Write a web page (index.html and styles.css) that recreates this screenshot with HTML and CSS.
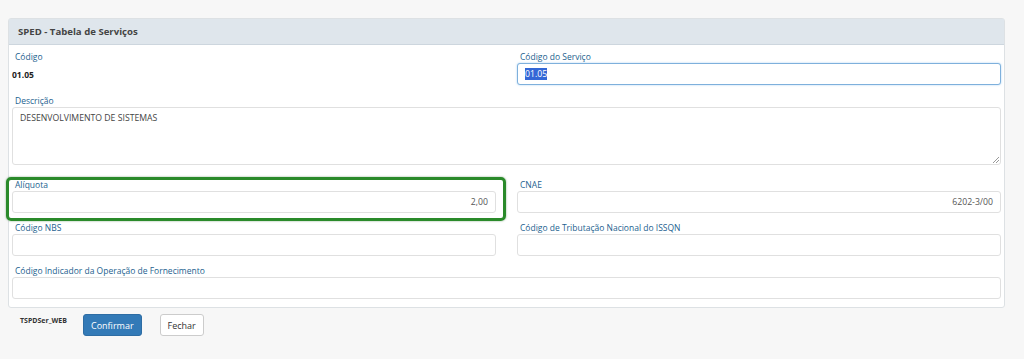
FILE: index.html
```html
<!DOCTYPE html>
<html lang="pt-BR">
<head>
    <meta charset="UTF-8">
    <title>SPED - Tabela de Serviços</title>
    <link rel="stylesheet" href="styles.css">
</head>
<body>
    <div class="panel">
        <div class="panel-heading">SPED - Tabela de Serviços</div>
        <div class="panel-body">
            <div class="row">
                <div class="field">
                    <label>Código</label>
                    <div class="static-value">01.05</div>
                </div>
                <div class="field">
                    <label>Código do Serviço</label>
                    <div class="input focused"><span class="selected">01.05</span></div>
                </div>
            </div>
            <div class="field full desc">
                <label>Descrição</label>
                <div class="input textarea">DESENVOLVIMENTO DE SISTEMAS<span class="grip"></span></div>
            </div>
            <div class="row">
                <div class="field highlighted">
                    <label>Alíquota</label>
                    <div class="input right">2,00</div>
                    <div class="highlight-box"></div>
                </div>
                <div class="field">
                    <label>CNAE</label>
                    <div class="input right">6202-3/00</div>
                </div>
            </div>
            <div class="row">
                <div class="field">
                    <label>Código NBS</label>
                    <div class="input"></div>
                </div>
                <div class="field">
                    <label>Código de Tributação Nacional do ISSQN</label>
                    <div class="input"></div>
                </div>
            </div>
            <div class="field full last">
                <label>Código Indicador da Operação de Fornecimento</label>
                <div class="input"></div>
            </div>
        </div>
    </div>
    <div class="footer">
        <span class="form-name">TSPDSer_WEB</span>
        <button class="btn btn-primary">Confirmar</button>
        <button class="btn btn-default">Fechar</button>
    </div>
</body>
</html>
```

FILE: styles.css
```css
body {
    margin: 0;
    padding: 18px 19px 0 8px;
    background: #f7f7f7;
    font-family: 'Open Sans', 'Noto Sans', sans-serif;
    font-size: 9px;
    color: #333;
}
.panel {
    background: #fff;
    border: 1px solid #dde1e4;
    border-radius: 3px;
}
.panel-heading {
    height: 25px;
    line-height: 25px;
    padding-left: 9px;
    background: #dfe6ec;
    border-bottom: 1px solid #cdd6de;
    font-size: 9.6px;
    font-weight: bold;
    color: #444;
}
.panel-body {
    padding: 5px 3px 8px 3px;
}
.row {
    display: grid;
    grid-template-columns: 484px 484px;
    column-gap: 21px;
}
.field {
    position: relative;
    margin-bottom: 8px;
}
.field.desc {
    margin-top: 1px;
}
.field.last {
    margin-bottom: 0;
}
label {
    display: block;
    height: 13px;
    line-height: 13px;
    padding-left: 3px;
    color: #245f8f;
    font-size: 8.5px;
}
.static-value {
    height: 22px;
    line-height: 24px;
    font-weight: bold;
    font-size: 8.5px;
    color: #222;
}
.input {
    box-sizing: border-box;
    height: 22px;
    line-height: 20px;
    padding: 0 7px;
    border: 1px solid #e0e0e0;
    border-radius: 3px;
    background: #fff;
    font-size: 8.7px;
    color: #555;
}
.input.right {
    text-align: right;
}
.input.focused {
    border-color: #7eb0dc;
    box-shadow: 0 0 2px rgba(102, 175, 233, 0.6);
}
.selected {
    background: #3367d6;
    color: #fff;
}
.input.textarea {
    position: relative;
    height: 58px;
    line-height: 20px;
    margin-bottom: 13px;
    color: #444;
}
.grip {
    position: absolute;
    right: 1px;
    bottom: 1px;
    width: 6px;
    height: 6px;
    background: linear-gradient(135deg, transparent 45%, #999 45%, #999 55%, transparent 55%, transparent 70%, #999 70%, #999 80%, transparent 80%);
}
.highlight-box {
    position: absolute;
    left: -6px;
    top: -1px;
    right: -10px;
    bottom: -8px;
    border: 3px solid #2a8a2a;
    border-radius: 5px;
    box-shadow: 0 0 2px rgba(0, 80, 0, 0.5);
    pointer-events: none;
}
.footer {
    display: flex;
    align-items: flex-start;
    padding: 6px 0 0 12px;
}
.form-name {
    font-size: 7px;
    font-weight: bold;
    color: #333;
    margin-top: 2px;
    width: 63px;
}
.btn {
    height: 22px;
    padding: 0 7px;
    border-radius: 3px;
    font-family: inherit;
    font-size: 9px;
    cursor: pointer;
}
.btn-primary {
    background: #337ab7;
    border: 1px solid #2e6da4;
    color: #fff;
    margin-right: 18px;
}
.btn-default {
    background: #fff;
    border: 1px solid #ccc;
    color: #333;
}
```
